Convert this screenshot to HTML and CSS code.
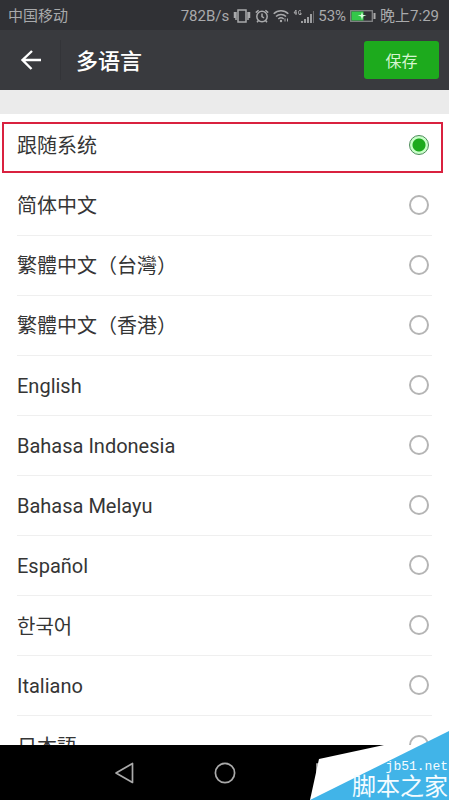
FILE: index.html
```html
<!DOCTYPE html>
<html lang="zh-CN">
<head>
<meta charset="utf-8">
<meta name="viewport" content="width=device-width, initial-scale=1">
<title>多语言</title>
<link rel="stylesheet" href="styles.css">
</head>
<body>
<div class="status">
  <span class="carrier">中国移动</span>
  <span>782B/s</span>
  <svg class="vibrate" width="18" height="14" viewBox="0 0 18 14" fill="none" stroke="currentColor" stroke-width="1.5"><rect x="5" y="1" width="8" height="12"/><path d="M1.500 3v6M3 3v8M15 3v8M16.500 3v6"/></svg>
  <svg class="alarm" width="14" height="14" viewBox="0 0 14 14" fill="none" stroke="currentColor" stroke-width="1.5"><circle cx="7" cy="7.5" r="5.200"/><path d="M7 4.500v3l2 1.500M.8 3.600l2.800-2.400M13.200 3.600l-2.800-2.400M3.500 11.500L2 13.300M10.500 11.500L12 13.300"/></svg>
  <svg class="wifi" width="16" height="14" viewBox="0 0 16 14" fill="none" stroke="currentColor" stroke-width="1.500"><path d="M.7 4.800a10.500 10.500 0 0 1 14.600 0M3 7.500a7.200 7.200 0 0 1 10 0M5.300 10a4 4 0 0 1 5.400 0"/><circle cx="8" cy="12" r="1.200" fill="currentColor" stroke="none"/><path d="M12 12.500v-3M14.500 12.500v-3" stroke-width="1"/></svg>
  <svg class="signal" width="21" height="15" viewBox="0 0 21 15" fill="none" stroke="currentColor"><path d="M3 1L1 4h3M3 1v5M8 2Q5.500 .5 5.500 3.500T8 5.500V4H7" stroke-width="1"/><path d="M9 14v-2M12 14v-4M15 14V8M18 14V5" stroke-width="1.800"/><path d="M20.500 14V2" stroke-width="1" opacity=".5"/></svg>
  <span>53%</span>
  <svg class="battery" width="26" height="12" viewBox="0 0 26 12"><rect x=".7" y=".7" width="21.600" height="10.600" fill="none" stroke="#858688" stroke-width="1.300"/><path d="M1.500 1.500h12v9h-12z" fill="#34c84a"/><path d="M23.500 3h2v6h-2z" fill="#aaa"/><path d="M12 2l-1 3H7.500l3.500 1.500L12 10l1-3.500L16.500 5H13z" fill="#d8ffdd"/></svg>
  <span>晚上7:29</span>
</div>
<header class="header">
  <button class="back" type="button" aria-label="返回"><svg width="22" height="22" viewBox="0 0 22 22" fill="none" stroke="#fff" stroke-width="2.400"><path d="M21 11H2.500M12 2L2.500 11l9 9"/></svg></button>
  <h1 class="title">多语言</h1>
  <button class="save" type="button">保存</button>
</header>
<main class="content">
  <form class="list">
    <label class="row selected"><span>跟随系统</span><input type="radio" name="language" checked></label>
    <label class="row"><span>简体中文</span><input type="radio" name="language"></label>
    <label class="row"><span>繁體中文（台灣）</span><input type="radio" name="language"></label>
    <label class="row"><span>繁體中文（香港）</span><input type="radio" name="language"></label>
    <label class="row"><span>English</span><input type="radio" name="language"></label>
    <label class="row"><span>Bahasa Indonesia</span><input type="radio" name="language"></label>
    <label class="row"><span>Bahasa Melayu</span><input type="radio" name="language"></label>
    <label class="row"><span>Español</span><input type="radio" name="language"></label>
    <label class="row"><span lang="ko">한국어</span><input type="radio" name="language"></label>
    <label class="row"><span>Italiano</span><input type="radio" name="language"></label>
    <label class="row"><span lang="ja">日本語</span><input type="radio" name="language"></label>
  </form>
</main>
<nav class="nav">
  <button type="button" aria-label="返回"><svg width="22" height="22" viewBox="0 0 22 22" fill="none" stroke="#aaa" stroke-width="1.700" stroke-linejoin="round"><path d="M18.500 1.500v19L2 11z"/></svg></button>
  <button type="button" aria-label="主页"><svg width="22" height="22" viewBox="0 0 22 22" fill="none" stroke="#aaa" stroke-width="1.700"><circle cx="11" cy="11" r="9.600"/></svg></button>
  <button type="button" aria-label="最近任务"><svg width="22" height="22" viewBox="0 0 22 22" fill="none" stroke="#aaa" stroke-width="1.700"><path d="M3 2h17v18H3z"/></svg></button>
</nav>
<div class="watermark">
  <svg class="corner" width="139" height="69" viewBox="0 0 139 69"><path d="M9 28L74 14h65v55H0z" fill="#fff"/><path d="M139 0v69H0z" fill="#41b4e8"/></svg>
  <span class="site">jb51.net</span>
  <span class="brand">脚本之家</span>
</div>
</body>
</html>
```
FILE: styles.css
```css
* {
  box-sizing: border-box;
}

body {
  position: relative;
  display: flex;
  flex-direction: column;
  height: 100vh;
  margin: 0;
  overflow: hidden;
  background: #fff;
  color: #353535;
  font-family: Roboto, "Noto Sans CJK SC", sans-serif;
}

button {
  padding: 0;
  border: 0;
  background: none;
  font: inherit;
}

svg {
  display: block;
  flex: none;
}

.status {
  display: flex;
  flex: none;
  align-items: center;
  gap: 4px;
  height: 30px;
  padding: 2px 10px 0 8px;
  background: #303135;
  color: #a9aaac;
  font-size: 15px;
  line-height: 20px;
  white-space: nowrap;
}

.carrier {
  margin-right: auto;
}

.header {
  display: flex;
  flex: none;
  align-items: center;
  height: 60px;
  padding-right: 10px;
  background: #393a3e;
  color: #fff;
}

.back {
  display: flex;
  align-items: center;
  width: 61px;
  height: 40px;
  padding-left: 20px;
  border-right: 1px solid #333438;
}

.title {
  flex: 1;
  margin: 0;
  padding: 4px 0 0 15px;
  font-size: 22px;
  font-weight: 500;
  line-height: 30px;
}

.save {
  width: 75px;
  height: 38px;
  border-radius: 3px;
  background: #1daa1d;
  color: #d5f5d0;
  font-size: 16px;
}

.content {
  flex: 1;
  min-height: 0;
  overflow: hidden;
  border-top: 24px solid #ebebeb;
}

.list {
  padding: 2px 17px 0;
}

.row {
  position: relative;
  display: flex;
  align-items: center;
  justify-content: space-between;
  height: 60px;
  padding-bottom: 2px;
  border-bottom: 1px solid #efefef;
  font-size: 20px;
  line-height: 30px;
}

.row span {
  padding-top: 2px;
}

.row.selected {
  border-color: transparent;
}

.selected::after {
  position: absolute;
  inset: 6px -11px 2px -15px;
  border: 2px solid #d9213f;
  content: "";
}

.row input {
  width: 20px;
  height: 20px;
  margin: 0 3px 0 0;
  border: 2px solid #b5b5b5;
  border-radius: 50%;
  appearance: none;
}

.row input:checked {
  border: 1px solid #4d8c5a;
  background: radial-gradient(circle, #1daa1d 6px, #c9ffc9 7px);
}

[lang="ko"] {
  font-family: "Noto Sans CJK KR", sans-serif;
}

[lang="ja"] {
  font-family: "Noto Sans CJK JP", sans-serif;
}

.nav {
  display: flex;
  flex: none;
  align-items: center;
  justify-content: center;
  gap: 78px;
  height: 55px;
  background: #000;
}

.watermark {
  position: absolute;
  right: 0;
  bottom: 0;
  display: flex;
  flex-direction: column;
  align-items: flex-end;
  padding-right: 1px;
  color: #f4fcff;
}

.corner {
  position: absolute;
  right: 0;
  bottom: 0;
}

.site {
  position: relative;
  font-family: "Liberation Mono", monospace;
  font-size: 13px;
  line-height: 16px;
}

.brand {
  position: relative;
  font-size: 24px;
  line-height: 25px;
}
```
